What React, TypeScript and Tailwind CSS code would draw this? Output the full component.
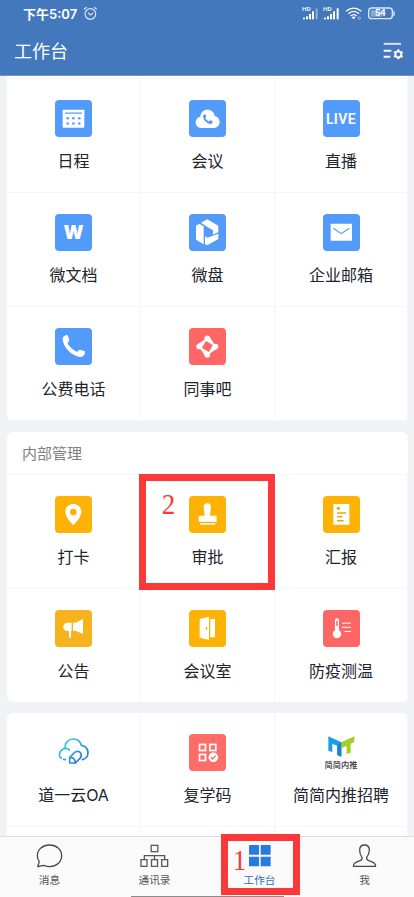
import React from 'react';

interface AppItem {
  label: string;
  icon: React.ReactNode;
}

interface TabItem {
  label: string;
  icon: React.ReactNode;
  active?: boolean;
}

const BLUE = 'bg-[#529bfa]';
const YELLOW = 'bg-[#feb206]';
const CORAL = 'bg-[#ff6666]';

const Tile: React.FC<{ color: string; children: React.ReactNode }> = ({ color, children }) => (
  <div className={`w-[37px] h-[37px] rounded-[4px] overflow-hidden flex items-center justify-center ${color}`}>
    {children}
  </div>
);

// Tile drawings share a 111 unit grid, three units per pixel
const Glyph: React.FC<{ children: React.ReactNode }> = ({ children }) => (
  <svg width="37" height="37" viewBox="0 0 111 111" fill="none">
    {children}
  </svg>
);

const CalendarIcon = () => (
  <Tile color={BLUE}>
    <Glyph>
      <rect x="23" y="29" width="65" height="54" rx="2" fill="#fff" />
      <path d="M30 39.5H81" stroke="#529bfa" strokeWidth="3.5" />
      {[38, 55, 73].map((x) => (
        <g key={x} fill="#529bfa">
          <circle cx={x} cy="54.5" r="3.8" />
          <circle cx={x} cy="70.5" r="3.8" />
        </g>
      ))}
    </Glyph>
  </Tile>
);

const MeetingIcon = () => (
  <Tile color={BLUE}>
    <Glyph>
      <path d="M37 84C26 84 20 76 20 67C20 58 27 51 34 50C35 37 44 29 55 29C67 29 76 37 77 48C86 50 92 57 92 66C92 77 84 84 74 84Z" fill="#fff" />
      <path
        d="M43 46L47 43C49 42 51 45 52 49C52 52 48 52 49 54C50 58 56 63 60 64C62 64 63 60 65 61C69 62 72 64 71 67L68 71C58 76 38 58 43 46Z"
        fill="#529bfa"
      />
    </Glyph>
  </Tile>
);

const LiveIcon = () => (
  <Tile color={BLUE}>
    <span className="text-white font-semibold text-[14px] leading-none tracking-[0.4px] font-[Roboto,sans-serif]">LIVE</span>
  </Tile>
);

const DocIcon = () => (
  <Tile color={BLUE}>
    <span className="text-white font-black text-[18.5px] leading-none font-[Inter,sans-serif]">W</span>
  </Tile>
);

const DriveIcon = () => (
  <Tile color={BLUE}>
    <Glyph>
      <g fill="#fff">
        <path d="M36 26L55 16L88 35V54L72 62V49L55 39L51 36Z" />
        <path d="M21 35L31 29L44 37V91L21 77Z" />
        <path d="M48 67L56 71L88 59V75L55 94L48 91Z" />
      </g>
    </Glyph>
  </Tile>
);

const MailIcon = () => (
  <Tile color={BLUE}>
    <Glyph>
      <rect x="23" y="29" width="64" height="51" rx="2" fill="#fff" />
      <path d="M31 43L55 59L79 43" stroke="#529bfa" strokeWidth="3.5" />
    </Glyph>
  </Tile>
);

const PhoneIcon = () => (
  <Tile color={BLUE}>
    <Glyph>
      <path
        d="M25 26L33 21C36 20 38 22 39 24L43 36C43 40 37 42 38 46C42 55 54 66 64 71C68 73 70 65 75 65L88 69C91 71 91 74 89 78C86 85 80 88 73 87C48 83 24 56 23 34C23 31 23 28 25 26Z"
        fill="#fff"
      />
    </Glyph>
  </Tile>
);

const ColleagueIcon = () => (
  <Tile color={CORAL}>
    <Glyph>
      {[0, 90, 180, 270].map((angle) => (
        <g key={angle} transform={`rotate(${angle} 55 55.5)`} fill="#fff">
          <circle cx="55" cy="31" r="8.5" />
          <path d="M50 38L62 27L78 51L76 54Z" />
        </g>
      ))}
    </Glyph>
  </Tile>
);

const PinIcon = () => (
  <Tile color={YELLOW}>
    <Glyph>
      <path
        fillRule="evenodd"
        d="M55 24C41 24 31 34 31 48C31 62 46 78 55 88C64 78 79 62 79 48C79 34 69 24 55 24ZM55 38A10 10 0 1 1 55 58A10 10 0 1 1 55 38Z"
        fill="#fff"
      />
    </Glyph>
  </Tile>
);

const StampIcon = () => (
  <Tile color={YELLOW}>
    <Glyph>
      <path d="M44 33C44 26 49 22 55 22C61 22 66 26 66 33L63 59H80Q83 59 83 62V77H29V62Q29 59 32 59H47Z" fill="#fff" />
      <rect x="33" y="81.5" width="46" height="4.5" fill="#fff" />
    </Glyph>
  </Tile>
);

const ReportIcon = () => (
  <Tile color={YELLOW}>
    <Glyph>
      <rect x="31" y="24" width="48" height="62" rx="1" fill="#fff" />
      <circle cx="46" cy="37" r="5" fill="#eda50d" />
      <path d="M42 51H69M42 62.5H57M42 74H62" stroke="#eda50d" strokeWidth="4.5" />
    </Glyph>
  </Tile>
);

const NoticeIcon = () => (
  <Tile color="bg-[#f6b31d]">
    <Glyph>
      <path d="M50 38H36C21 40 21 61 36 63H42V82Q45 86 48 82V63H50Z" fill="#fff" />
      <path d="M54 38H62L84 27V71L62 63H54Z" fill="#fff" />
    </Glyph>
  </Tile>
);

const RoomIcon = () => (
  <Tile color={YELLOW}>
    <Glyph>
      <path d="M32 27L60 20V90L32 83Z" fill="#fff" />
      <rect x="64" y="27" width="14" height="55" fill="#fff" />
      <ellipse cx="52.5" cy="55" rx="2" ry="5" fill="#feb206" />
    </Glyph>
  </Tile>
);

const ThermometerIcon = () => (
  <Tile color={CORAL}>
    <Glyph>
      <rect x="36" y="25" width="12" height="45" rx="6" fill="#fff" />
      <circle cx="42" cy="72" r="12.5" fill="#fff" />
      <path d="M42 32V48" stroke="#ff6666" strokeWidth="4.5" />
      <path d="M57 39.5H84M57 52H84M64 64.5H84" stroke="#fff" strokeWidth="3" />
    </Glyph>
  </Tile>
);

const CloudOaIcon = () => (
  <Glyph>
    <defs>
      <linearGradient id="cloudOa" x1="20" y1="20" x2="90" y2="85" gradientUnits="userSpaceOnUse">
        <stop offset="0.15" stopColor="#2ccbe0" />
        <stop offset="0.8" stopColor="#2d7fd3" />
      </linearGradient>
    </defs>
    <g stroke="url(#cloudOa)" strokeWidth="5" strokeLinecap="round" strokeLinejoin="round">
      <path d="M43 48C37 41 26 42 19 49C10 58 12 69 19 73" />
      <path d="M30 41C30 25 41 15 55 15C68 15 76 23 79 34C90 35 99 44 99 56C99 67 91 75 82 77" />
      <path d="M26 76L31 77" />
      <path d="M44 87V71L58 56C65 49 75 52 78 59C80 65 79 69 75 73L61 87Z" />
      <path d="M44 71Q61 70 61 87" />
    </g>
  </Glyph>
);

const SchoolCodeIcon = () => (
  <Tile color="bg-[#fd6d67]">
    <Glyph>
      <g stroke="#fff" strokeWidth="5">
        <rect x="31.5" y="31.5" width="18" height="18" />
        <rect x="62.5" y="31.5" width="18" height="18" />
        <rect x="31.5" y="61.5" width="18" height="18" />
      </g>
      <circle cx="73" cy="70" r="14.5" fill="#fff" />
      <path d="M66 70L71 75L80 65" stroke="#fd6d67" strokeWidth="4" />
    </Glyph>
  </Tile>
);

const ReferralIcon = () => (
  <div className="w-[37px] h-[37px] flex flex-col items-center">
    <svg width="37" height="25" viewBox="0 0 111 75" fill="none" className="shrink-0">
      <path d="M16 7L55 25V68L43 63V36L28 29V54L16 50Z" fill="#1c9ee3" />
      <path d="M55 25L94 7V24L83 29V56L71 60V35L55 43Z" fill="#a4cf26" />
      <path d="M43 36L55 25V68L43 63Z" fill="#1682cc" />
    </svg>
    <span className="mt-px text-[8.2px] leading-[11px] font-medium whitespace-nowrap text-[#333]">简简内推</span>
  </div>
);

const officeApps: AppItem[] = [
  { label: '日程', icon: <CalendarIcon /> },
  { label: '会议', icon: <MeetingIcon /> },
  { label: '直播', icon: <LiveIcon /> },
  { label: '微文档', icon: <DocIcon /> },
  { label: '微盘', icon: <DriveIcon /> },
  { label: '企业邮箱', icon: <MailIcon /> },
  { label: '公费电话', icon: <PhoneIcon /> },
  { label: '同事吧', icon: <ColleagueIcon /> },
];

const manageApps: AppItem[] = [
  { label: '打卡', icon: <PinIcon /> },
  { label: '审批', icon: <StampIcon /> },
  { label: '汇报', icon: <ReportIcon /> },
  { label: '公告', icon: <NoticeIcon /> },
  { label: '会议室', icon: <RoomIcon /> },
  { label: '防疫测温', icon: <ThermometerIcon /> },
];

const otherApps: AppItem[] = [
  { label: '道一云OA', icon: <CloudOaIcon /> },
  { label: '复学码', icon: <SchoolCodeIcon /> },
  { label: '简简内推招聘', icon: <ReferralIcon /> },
];

const tabs: TabItem[] = [
  {
    label: '消息',
    icon: (
      <svg width="27" height="24" viewBox="0 0 81 72" fill="none" stroke="#484848" strokeWidth="3.8" strokeLinejoin="round">
        <path d="M41 3C61 3 77 17 77 35C77 54 61 68 41 68C34 68 28 66 23 64L5 68L10 53C6 48 4 42 4 35C4 17 20 3 41 3Z" />
      </svg>
    ),
  },
  {
    label: '通讯录',
    icon: (
      <svg width="29" height="24" viewBox="0 0 87 72" fill="none" stroke="#555" strokeWidth="3.8">
        <rect x="33.5" y="4" width="20" height="19" />
        <path d="M13 46V35H74V46M43.5 35V46" />
        <rect x="3" y="47" width="18" height="20" />
        <rect x="34.5" y="47" width="18" height="20" />
        <rect x="65" y="47" width="18" height="20" />
      </svg>
    ),
  },
  {
    label: '工作台',
    active: true,
    icon: (
      <svg width="22" height="24" viewBox="0 0 66 72" fill="#277ade">
        <rect x="0" y="3" width="30" height="29" rx="2" />
        <rect x="35" y="3" width="30" height="29" rx="2" />
        <rect x="0" y="38" width="30" height="29" rx="2" />
        <rect x="35" y="38" width="30" height="29" rx="2" />
      </svg>
    ),
  },
  {
    label: '我',
    icon: (
      <svg width="25" height="24" viewBox="0 0 75 72" fill="none" stroke="#484848" strokeWidth="3.8" strokeLinejoin="round">
        <path d="M30 40C25 34 23 28 23 19C23 9 29 3 37 3C46 3 52 9 52 19C52 28 49 34 44 40C43 45 45 48 50 50C65 55 71 58 71 67H4C4 58 10 55 24 50C30 48 31 45 30 40Z" />
      </svg>
    ),
  },
];

const AppCell: React.FC<{ item?: AppItem }> = ({ item }) => (
  <div className="h-[114px] pt-[21px] flex flex-col items-center border-b border-r border-[#f5f6f7]">
    {item && (
      <>
        {item.icon}
        <span className="mt-3 text-base leading-6 whitespace-nowrap text-[#20242c]">{item.label}</span>
      </>
    )}
  </div>
);

const AppGrid: React.FC<{ items: AppItem[]; cells: number }> = ({ items, cells }) => (
  <div className="grid grid-cols-[134px_134px_133px]">
    {Array.from({ length: cells }, (_, i) => (
      <AppCell key={i} item={items[i]} />
    ))}
  </div>
);

const Signal: React.FC<{ faded?: boolean }> = ({ faded }) => (
  <svg width="17" height="15" viewBox="0 0 51 45" fill="#fff">
    <text x="0" y="14" fontSize="18" fontFamily="Roboto, sans-serif" fontWeight="500" textLength="26" lengthAdjust="spacingAndGlyphs">HD</text>
    <rect x="3" y="35" width="6" height="5" />
    <rect x="12" y="31" width="6" height="9" />
    <rect x="21" y="24" width="6" height="16" />
    <rect x="30" y="16" width="6" height="24" />
    <rect x="41" y="7" width="6" height="33" opacity={faded ? 0.4 : 1} />
  </svg>
);

const StatusBar = () => (
  <div className="h-[27px] pl-[23px] pr-[18px] flex items-center text-white">
    <span className="w-[55px] pt-px text-[13px] leading-none font-semibold whitespace-nowrap">下午5:07</span>
    <svg width="15" height="15" viewBox="0 0 45 45" fill="none" stroke="#dce8f7" strokeWidth="3.5" className="ml-[5px]">
      <circle cx="22" cy="24" r="16" />
      <path d="M15 20L22 27L30 21M3 10L11 4M33 4L41 10" />
    </svg>
    <div className="ml-auto flex items-center">
      <Signal faded />
      <div className="w-1" />
      <Signal />
      <svg width="18" height="15" viewBox="0 0 54 45" fill="none" stroke="#fff" strokeWidth="4" className="ml-[5px]">
        <path d="M3 16Q26 -3 49 16M10 23Q26 9 42 23M17 30Q26 22 35 30" />
        <path d="M20 34L26 40L32 34Q26 29 20 34Z" fill="#fff" stroke="none" />
        <circle cx="43" cy="37" r="3.5" strokeWidth="2" opacity="0.7" />
      </svg>
      <svg width="28" height="13" viewBox="0 0 84 39" fill="none" className="ml-[5px]">
        <rect x="2" y="3" width="71" height="32" rx="9" stroke="#dce8f7" strokeWidth="4" />
        <rect x="8" y="9" width="35" height="20" rx="3" fill="#87abd8" />
        <path d="M78 14V25" stroke="#dce8f7" strokeWidth="4" strokeLinecap="round" />
        <text x="37" y="28" textAnchor="middle" fontSize="25" fontWeight="700" fontFamily="Roboto, sans-serif" fill="#fff" textLength="32" lengthAdjust="spacingAndGlyphs">54</text>
      </svg>
    </div>
  </div>
);

const Header = () => (
  <header className="h-[76px] shrink-0 bg-[#4478bd] border-b border-[#6f96cb]">
    <StatusBar />
    <div className="h-[46px] pl-3.5 pr-2.5 flex items-center justify-between">
      <h1 className="pt-[3px] text-[18px] leading-none text-white">工作台</h1>
      <svg width="21" height="19" viewBox="0 0 63 57" fill="none" stroke="#fff" className="mt-[3px]">
        <path d="M2 5.5H54" stroke="#d5e2f4" strokeWidth="6" />
        <path d="M2 26H25M2 44H22" strokeWidth="6" />
        <circle cx="46" cy="37" r="9" strokeWidth="5.5" />
        <path d="M46 22V28M46 46V52M33 29.5L38.5 32.5M53.5 41.5L59 44.5M59 29.5L53.5 32.5M38.5 41.5L33 44.5" strokeWidth="6" />
      </svg>
    </div>
  </header>
);

const TabBar = () => (
  <nav className="h-[61px] shrink-0 bg-[#fafafa] border-t border-[#dcdde0] flex flex-col">
    <div className="flex -mx-[3px] h-[59px]">
      {tabs.map((tab) => (
        <div key={tab.label} className="flex-1 pt-[7px] flex flex-col items-center">
          {tab.icon}
          <span className={`mt-1 text-[10.7px] leading-[18px] ${tab.active ? 'text-[#2d6dbb]' : 'text-[#555]'}`}>
            {tab.label}
          </span>
        </div>
      ))}
    </div>
    <div className="w-[153px] h-px bg-[#8c8c8c] mx-auto" />
  </nav>
);

export default function App() {
  return (
    <div className="relative w-[414px] h-[897px] overflow-hidden flex flex-col bg-[#f1f2f5] font-[Inter,'Noto_Sans_CJK_SC',sans-serif]">
      <Header />

      <main className="flex-1 min-h-0 overflow-hidden pl-[7px] pr-1.5 flex flex-col gap-[11px]">
        <section className="shrink-0 bg-white rounded-b-[6px] overflow-hidden">
          <div className="h-[3px] border-b border-[#f5f6f7]" />
          <AppGrid items={officeApps} cells={9} />
        </section>

        <section className="shrink-0 h-[270px] bg-white rounded-[6px] overflow-hidden">
          <h2 className="h-[43px] pl-[15px] pt-[3px] border-b border-[#f5f6f7] flex items-center text-[15px] text-[#808080]">内部管理</h2>
          <AppGrid items={manageApps} cells={6} />
        </section>

        <section className="shrink-0 bg-white rounded-t-[6px] overflow-hidden">
          <AppGrid items={otherApps} cells={6} />
        </section>
      </main>

      <TabBar />

      {/* Step markers */}
      <div className="absolute left-[139px] top-[474px] w-[136px] h-[116px] border-[7px] border-[#fc3838]">
        <span className="absolute left-[15px] top-[6px] text-[30px] leading-[34px] text-[#fc3838] scale-x-90 font-['Liberation_Serif',serif]">2</span>
      </div>
      <div className="absolute left-[221px] top-[834px] w-[79px] h-[61px] border-[7px] border-[#fc3838]">
        <span className="absolute left-[4px] top-[2px] text-[30px] leading-[34px] text-[#fc3838] scale-x-90 font-['Liberation_Serif',serif]">1</span>
      </div>
    </div>
  );
}
